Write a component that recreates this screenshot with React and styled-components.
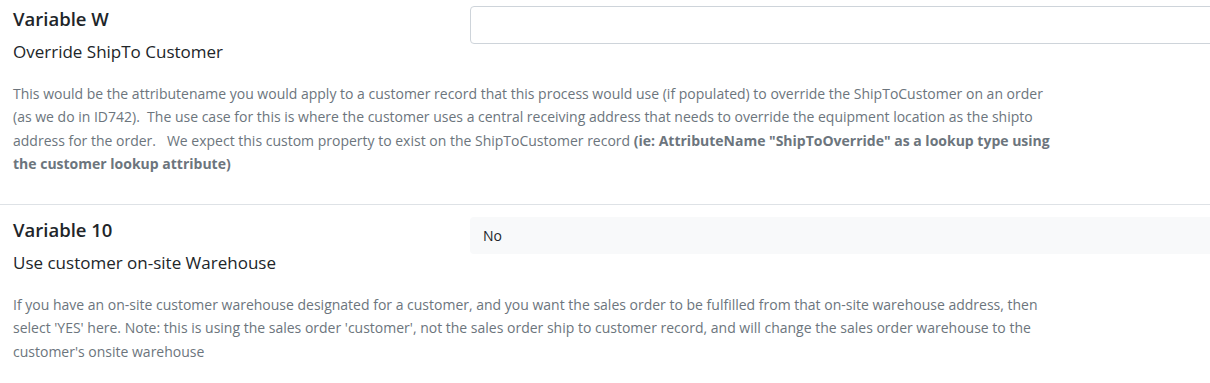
import React from 'react';
import styled, { createGlobalStyle } from 'styled-components';

const GlobalStyle = createGlobalStyle`
  body {
    margin: 0;
    background: #fff;
    overflow: hidden;
    font-family: "Open Sans", "Noto Sans", sans-serif;
    color: #212529;
  }
`;

const settings = [
  {
    id: 'w',
    name: 'Variable W',
    label: 'Override ShipTo Customer',
    kind: 'input',
    value: '',
    help: (
      <>
        This would be the attributename you would apply to a customer record that this process would use (if
        populated) to override the ShipToCustomer on an order (as we do in ID742).&nbsp; The use case for this is
        where the customer uses a central receiving address that needs to override the equipment location as the
        shipto address for the order.&nbsp;&nbsp; We expect this custom property to exist on the ShipToCustomer
        record <b>(ie: AttributeName "ShipToOverride" as a lookup type using the customer lookup attribute)</b>
      </>
    ),
  },
  {
    id: '10',
    name: 'Variable 10',
    label: 'Use customer on-site Warehouse',
    kind: 'select',
    value: 'No',
    help: (
      <>
        If you have an on-site customer warehouse designated for a customer, and you want the sales order to be
        fulfilled from that on-site warehouse address, then select 'YES' here. Note: this is using the sales order
        'customer', not the sales order ship to customer record, and will change the sales order warehouse to the
        customer's onsite warehouse
      </>
    ),
  },
];

function App() {
  return (
    <>
      <GlobalStyle />
      <Page>
        {settings.map((s, i) => (
          <Setting key={s.id} $divider={i > 0}>
            <Head>
              <Labels>
                <Name>{s.name}</Name>
                <Label>{s.label}</Label>
              </Labels>
              {s.kind === 'input' ? (
                <TextInput type="text" defaultValue={s.value} />
              ) : (
                <SelectBox>{s.value}</SelectBox>
              )}
            </Head>
            <Help>{s.help}</Help>
          </Setting>
        ))}
      </Page>
    </>
  );
}

const Page = styled.div`
  width: 1260px;
`;

const Setting = styled.section`
  padding: ${(p) => (p.$divider ? '12px 0 20px 13px' : '6px 0 29px 13px')};
  border-top: ${(p) => (p.$divider ? '1px solid #dee2e6' : 'none')};
`;

const Head = styled.div`
  display: flex;
  align-items: flex-start;
`;

const Labels = styled.div`
  width: 457px;
  flex-shrink: 0;
  display: flex;
  flex-direction: column;
  gap: 9px;
`;

const Name = styled.h3`
  margin: 0;
  font-size: 18.5px;
  font-weight: 600;
  line-height: 26px;
  color: #212529;
`;

const Label = styled.div`
  font-size: 17px;
  line-height: 22px;
  color: #212529;
`;

const TextInput = styled.input`
  flex: 1;
  height: 38px;
  box-sizing: border-box;
  border: 1px solid #ced4da;
  border-radius: 4px;
  background: #fff;
  padding: 6px 12px;
  font: inherit;
  font-size: 14px;
  outline: none;
`;

const SelectBox = styled.div`
  flex: 1;
  height: 37px;
  box-sizing: border-box;
  border-radius: 4px;
  background: #f8f9fa;
  padding: 0 13px;
  display: flex;
  align-items: center;
  font-size: 14px;
  color: #212529;
`;

const Help = styled.p`
  margin: 19px 0 0;
  max-width: 1045px;
  font-size: 14px;
  line-height: 23.3px;
  color: #6c757d;

  b {
    font-weight: 700;
  }
`;

export default App;
